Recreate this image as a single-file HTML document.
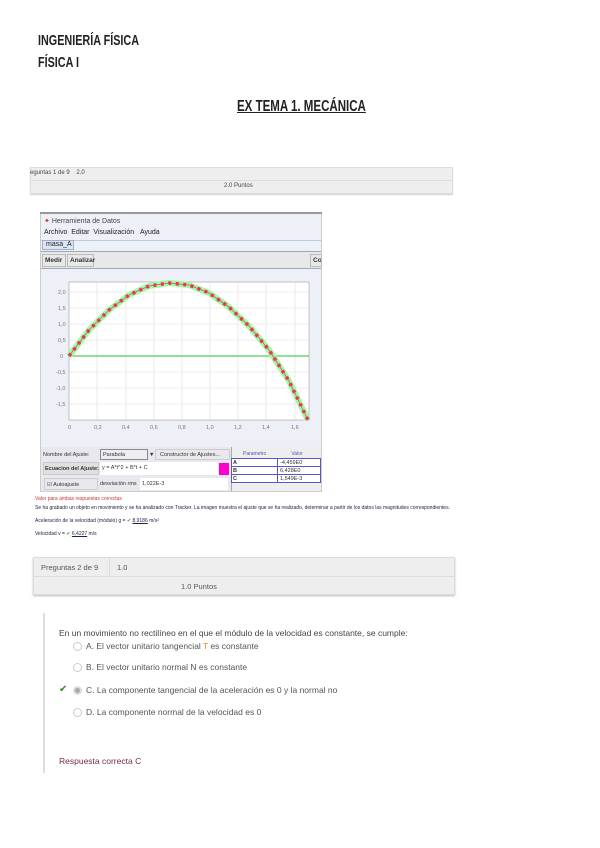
<!DOCTYPE html>
<html><head><meta charset="utf-8"><style>
*{margin:0;padding:0;box-sizing:border-box}
body{width:600px;height:848px;background:#fff;position:relative;overflow:hidden;font-family:"Liberation Sans",sans-serif;color:#333}
.a{position:absolute;white-space:nowrap}
.hd{font-weight:bold;font-size:15px;color:#222;transform:scaleX(.72);transform-origin:left top}
.small{font-size:6px;color:#444}
.opt{font-size:8.5px;color:#555}
.radio{position:absolute;width:9px;height:9px;border:1px solid #ccc;border-radius:50%;background:#fff}
</style></head><body>
<div class="a hd" style="left:38px;top:32px">INGENIERÍA FÍSICA</div>
<div class="a hd" style="left:38px;top:54px">FÍSICA I</div>
<div class="a hd" style="left:237px;top:98px;font-size:16px;text-decoration:underline">EX TEMA 1. MECÁNICA</div>

<div class="a" style="left:30px;top:167px;width:423px;height:27px;background:#eee;border:1px solid #ddd;box-shadow:0 1px 1px #ccc"></div>
<div class="a" style="left:30px;top:180px;width:423px;height:1px;background:#ddd"></div>
<div class="a small" style="left:30px;top:170px">eguntas 1 de 9 &nbsp;&nbsp; 2.0</div>
<div class="a small" style="left:224px;top:183px">2.0 Puntos</div>

<div class="a" style="left:40px;top:212px;width:282px;height:280px;background:#eef0f8;border:1px solid #ccc"></div>
<div class="a" style="left:40px;top:212px;width:282px;height:2px;background:#999"></div>
<div class="a small" style="left:44px;top:217px;font-size:7px"><span style="color:#c33">✦</span> Herramienta de Datos</div>
<div class="a" style="left:44px;top:229px;font-size:7px;color:#222">Archivo &nbsp;Editar &nbsp;Visualización &nbsp;&nbsp;Ayuda</div>
<div class="a" style="left:41px;top:240px;width:280px;height:1px;background:#bcd"></div>
<div class="a" style="left:42px;top:240px;width:32px;height:10px;background:#dbe6f5;border:1px solid #aac;font-size:7px;padding-left:3px;color:#222">masa_A</div>
<div class="a" style="left:41px;top:251px;width:280px;height:18px;background:#e8e8e8;border-top:1px solid #9ab;border-bottom:1px solid #9ab"></div>
<div class="a" style="left:42px;top:254px;width:24px;height:13px;border:1px solid #bbb;font-size:6.5px;font-weight:bold;padding:2px;color:#333">Medir</div>
<div class="a" style="left:67px;top:254px;width:27px;height:13px;border:1px solid #bbb;font-size:6.5px;font-weight:bold;padding:2px;color:#333">Analizar</div>
<div class="a" style="left:310px;top:254px;width:12px;height:13px;border:1px solid #bbb;font-size:6.5px;font-weight:bold;padding:2px;color:#333;overflow:hidden">Con</div>

<svg class="a" style="left:40px;top:270px" width="282" height="178" viewBox="40 270 282 178">
<rect x="69" y="282" width="240" height="138" fill="#fff" stroke="#888" stroke-width=".5"/>
<g stroke="#ddd" stroke-width=".6">
<line x1="97" y1="282" x2="97" y2="420"/><line x1="126" y1="282" x2="126" y2="420"/><line x1="154" y1="282" x2="154" y2="420"/><line x1="182" y1="282" x2="182" y2="420"/><line x1="210" y1="282" x2="210" y2="420"/><line x1="238" y1="282" x2="238" y2="420"/><line x1="266" y1="282" x2="266" y2="420"/><line x1="295" y1="282" x2="295" y2="420"/>
<line x1="69" y1="292" x2="309" y2="292"/><line x1="69" y1="308" x2="309" y2="308"/><line x1="69" y1="324" x2="309" y2="324"/><line x1="69" y1="340" x2="309" y2="340"/><line x1="69" y1="372" x2="309" y2="372"/><line x1="69" y1="388" x2="309" y2="388"/><line x1="69" y1="404" x2="309" y2="404"/>
</g>
<line x1="69" y1="356" x2="309" y2="356" stroke="#5c5" stroke-width="1.3"/>
<g fill="none" stroke-linejoin="round">
<path id="c" d="M69 356 L89 330 L109 310 L129 295 L149 286 L169 283 L189 285 L209 293 L229 307 L249 326 L269 350 L289 381 L308 420" stroke="#9f9" stroke-width="6"/>
<path d="M69 356 L89 330 L109 310 L129 295 L149 286 L169 283 L189 285 L209 293 L229 307 L249 326 L269 350 L289 381 L308 420" stroke="#e3a" stroke-width=".8"/>
<path d="M69 356 L89 330 L109 310 L129 295 L149 286 L169 283 L189 285 L209 293 L229 307 L249 326 L269 350 L289 381 L308 420" stroke="#e35" stroke-width="3.5" stroke-dasharray="3 4.5"/>
</g>
<g font-size="5.5" fill="#777" font-family="Liberation Sans">
<text x="58" y="294">2,0</text><text x="58" y="310">1,5</text><text x="58" y="326">1,0</text><text x="58" y="342">0,5</text><text x="60" y="358">0</text><text x="56" y="374">-0,5</text><text x="56" y="390">-1,0</text><text x="56" y="406">-1,5</text>
<text x="68" y="429">0</text><text x="94" y="429">0,2</text><text x="122" y="429">0,4</text><text x="150" y="429">0,6</text><text x="178" y="429">0,8</text><text x="206" y="429">1,0</text><text x="234" y="429">1,2</text><text x="262" y="429">1,4</text><text x="291" y="429">1,6</text>
</g>
</svg>

<div class="a" style="left:41px;top:447px;width:190px;height:44px;background:#e8e8ee"></div>
<div class="a" style="left:43px;top:452px;font-size:5.5px;color:#333">Nombre del Ajuste:</div>
<div class="a" style="left:100px;top:449px;width:48px;height:11px;border:1px solid #889;background:#eee;font-size:5.5px;padding:2px">Parabola</div>
<div class="a" style="left:149px;top:452px;font-size:5.5px">▼</div>
<div class="a" style="left:155px;top:449px;width:75px;height:11px;border:1px solid #ccc;font-size:5.5px;padding:2px 4px">Constructor de Ajustes...</div>
<div class="a" style="left:43px;top:462px;width:56px;height:13px;background:#e0e0e0;border:1px solid #ccc;font-size:5.5px;font-weight:bold;padding:3px 1px">Ecuacion del Ajuste:</div>
<div class="a" style="left:100px;top:462px;width:118px;height:13px;background:#fff;font-size:5.5px;padding:3px 2px">y = A*t^2 + B*t + C</div>
<div class="a" style="left:219px;top:463px;width:10px;height:12px;background:#f0c"></div>
<div class="a" style="left:44px;top:478px;width:54px;height:12px;border:1px solid #ccc;font-size:5.5px;padding:3px 2px">☑ Autoajuste</div>
<div class="a" style="left:100px;top:481px;font-size:5.5px">desviación rms</div>
<div class="a" style="left:140px;top:478px;width:88px;height:12px;background:#fff;font-size:5.5px;padding:3px 2px">1,022E-3</div>
<div class="a" style="left:231px;top:447px;width:90px;height:44px;background:#eee;border-left:1px solid #aaa"></div>
<div class="a" style="left:231px;top:451px;font-size:5px;color:#55b;width:90px"><span style="margin-left:12px">Parametro</span><span style="margin-left:25px">Valor</span></div>
<div class="a" style="left:231px;top:458px;width:90px;height:25px;border:1px solid #55c;background:#fff;font-size:5.5px;line-height:8px">
<div style="border-bottom:1px solid #55c;height:8px;position:relative"><b style="position:absolute;left:1px">A</b><span style="position:absolute;left:45px;border-left:1px solid #55c;padding-left:2px">-4,459E0</span></div>
<div style="border-bottom:1px solid #55c;height:8px;position:relative"><b style="position:absolute;left:1px">B</b><span style="position:absolute;left:45px;border-left:1px solid #55c;padding-left:2px">6,428E0</span></div>
<div style="height:8px;position:relative"><b style="position:absolute;left:1px">C</b><span style="position:absolute;left:45px;border-left:1px solid #55c;padding-left:2px">1,549E-3</span></div></div>

<div class="a" style="left:35px;top:496px;font-size:5px;color:#c33">Valor para ambas respuestas correctas</div>
<div class="a" style="left:35px;top:505px;font-size:5px;color:#224">Se ha grabado un objeto en movimiento y se ha analizado con Tracker. La imagen muestra el ajuste que se ha realizado, determinar a partir de los datos las magnitudes correspondientes.</div>
<div class="a" style="left:35px;top:518px;font-size:5px;color:#224">Aceleración de la velocidad (módulo) g = <span style="color:#393">✔</span> <u>8,9186</u> m/s²</div>
<div class="a" style="left:35px;top:531px;font-size:5px;color:#224">Velocidad v = <span style="color:#393">✔</span> <u>6,4227</u> m/s</div>

<div class="a" style="left:33px;top:557px;width:422px;height:38px;background:#eee;border:1px solid #ddd;box-shadow:0 1px 2px #bbb"></div>
<div class="a" style="left:33px;top:576px;width:422px;height:1px;background:#ddd"></div>
<div class="a" style="left:109px;top:557px;width:1px;height:19px;background:#ddd"></div>
<div class="a" style="left:41px;top:563px;font-size:7.5px;color:#555">Preguntas 2 de 9</div>
<div class="a" style="left:117px;top:563px;font-size:7.5px;color:#555">1.0</div>
<div class="a" style="left:181px;top:582px;font-size:7.5px;color:#555">1.0 Puntos</div>

<div class="a" style="left:43px;top:613px;width:2px;height:160px;background:#ddd"></div>
<div class="a" style="left:59px;top:628px;font-size:8.5px;color:#444">En un movimiento no rectilíneo en el que el módulo de la velocidad es constante, se cumple:</div>
<div class="radio" style="left:73px;top:642px"></div>
<div class="a opt" style="left:86px;top:641px">A. El vector unitario tangencial <span style="color:#e80">T</span> es constante</div>
<div class="radio" style="left:73px;top:663px"></div>
<div class="a opt" style="left:86px;top:662px">B. El vector unitario normal N es constante</div>
<div class="a" style="left:59px;top:684px;font-size:10px;color:#383">✔</div>
<div class="radio" style="left:73px;top:686px;background:#aaa;border:2px solid #ddd"></div>
<div class="a opt" style="left:86px;top:685px">C. La componente tangencial de la aceleración es 0 y la normal no</div>
<div class="radio" style="left:73px;top:708px"></div>
<div class="a opt" style="left:86px;top:707px">D. La componente normal de la velocidad es 0</div>
<div class="a" style="left:59px;top:756px;font-size:8.5px;color:#7a2a4a">Respuesta correcta C</div>
</body></html>
